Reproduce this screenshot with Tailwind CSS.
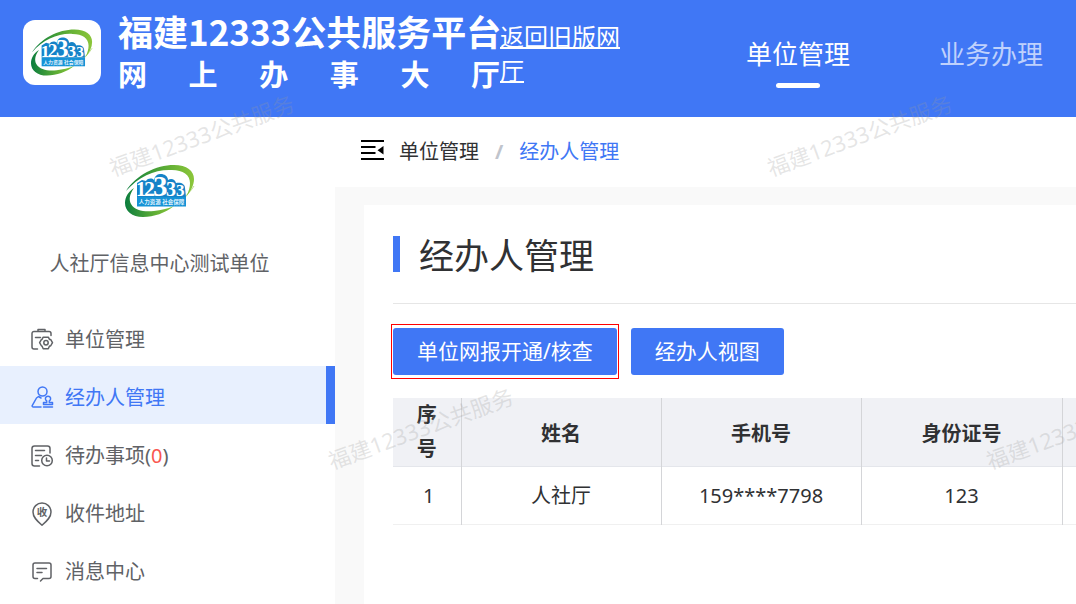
<!DOCTYPE html>
<html lang="zh-CN">
<head>
    <meta charset="UTF-8">
    <meta name="viewport" content="width=device-width, initial-scale=1.0">
    <title>福建12333公共服务平台 - 经办人管理</title>
    <script src="https://cdn.jsdelivr.net/npm/@tailwindcss/browser@4"></script>
</head>
<body class="relative flex h-screen flex-col overflow-hidden bg-white font-['Noto_Sans','Noto_Sans_CJK_SC',sans-serif] text-xl text-[#303133]">
    <!-- Shared logo -->
    <svg class="absolute size-0" aria-hidden="true">
        <defs>
            <linearGradient id="swoosh" x1="0" y1="0" x2="1" y2="0">
                <stop offset="0" stop-color="#0b7d3e"></stop>
                <stop offset="0.6" stop-color="#5fae35"></stop>
                <stop offset="1" stop-color="#8cc63a"></stop>
            </linearGradient>
        </defs>
        <symbol id="logo" viewBox="0 0 70 53">
            <path fill="url(#swoosh)" d="M1 26C11 10 31 0 49 0c13 0 20 6 20 14 0 6-3 12-8 18 3-6 4-10 4-14 0-8-7-13-18-13C31 4 14 11 1 26z"></path>
            <path fill="url(#swoosh)" d="M9 23C4 30 4 35 6 39c4 7 14 8 23 7 7-1 13-2 20-5-9 7-20 11-31 11C7 52 0 46 0 38c0-6 3-11 9-15z"></path>
            <path stroke="#8cc63a" stroke-width="0.6" fill="none" d="M69 21c-3 5-7 9-11 12"></path>
            <path fill="#1583c8" d="M12 18l5-3 4 1c2-3 6-3 8-1 1-5 4-6 7-6s7 2 7 6c3-2 7-1 8 3 5-1 9 1 9 5l1 9H12z"></path>
            <g font-family="Liberation Serif" font-weight="bold" fill="#fff">
                <text x="11" y="31" font-size="20">1</text>
                <text x="19" y="31" font-size="22">2</text>
                <text x="28" y="31" font-size="29">3</text>
                <text x="41" y="31" font-size="20">3</text>
                <text x="51" y="31" font-size="17">3</text>
            </g>
            <rect x="12" y="32" width="49" height="9.500" fill="#1593d6"></rect>
            <text x="36.500" y="39" font-size="5.500" text-anchor="middle" fill="#e4f4fd" font-weight="bold">人力资源 社会保障</text>
        </symbol>
    </svg>

    <!-- Header -->
    <header class="flex h-[117px] shrink-0 items-start bg-[#4077f5] text-white">
        <div class="mt-5 ml-[23px] flex h-[65px] w-[78px] shrink-0 items-center justify-center rounded-xl bg-white">
            <svg class="h-12 w-[62px]"><use href="#logo"></use></svg>
        </div>
        <h1 class="mt-[10px] ml-[17px] w-[382px] shrink-0 font-['Noto_Sans_CJK_SC',sans-serif] font-bold">
            <span class="block text-[35px] leading-[42px] whitespace-nowrap">福建12333公共服务平台</span>
            <span class="flex justify-between text-[29px] leading-[42px]">
                <span>网</span><span>上</span><span>办</span><span>事</span><span>大</span><span>厅</span>
            </span>
        </h1>
        <a href="#" class="mt-5 w-[122px] shrink-0 text-2xl leading-[34px] break-all underline underline-offset-1">返回旧版网厅</a>
        <nav class="mt-9 ml-auto flex shrink-0 gap-[89px] pr-[33px] text-[26px] leading-9 whitespace-nowrap">
            <a href="#" class="flex flex-col items-center gap-[11px]">单位管理<span class="h-[5px] w-11 rounded-full bg-white"></span></a>
            <a href="#" class="text-[#bfd1fc]">业务办理</a>
        </nav>
    </header>

    <div class="flex min-h-0 flex-1">
        <!-- Sidebar -->
        <aside class="w-[335px] shrink-0 text-[#606266]">
            <div class="flex h-[191px] flex-col items-center pt-12 pr-4">
                <svg class="h-[53px] w-[70px]"><use href="#logo"></use></svg>
                <p class="mt-[30px] leading-8">人社厅信息中心测试单位</p>
            </div>
            <nav>
                <a href="#" class="flex h-[58px] items-center gap-[11px] pt-[6px] pl-[30px]">
                    <svg class="size-6" viewBox="0 0 24 24" fill="none" stroke="currentColor" stroke-width="1.500" stroke-linecap="round" stroke-linejoin="round">
                        <path d="M7.500 21H4a2 2 0 0 1-2-2V5.500a2 2 0 0 1 2-2h15a2 2 0 0 1 2 2v2M8 3.500V1.500h7v2M5.500 9.500h5"></path>
                        <path d="M13.200 9.200h5.100l1.200 2.200h1.100l1.900 3.300-1.900 3.300h-1.100l-1.200 2.700h-5.100l-1.200-2.700h-.5L9.600 14.700l1.900-3.300h.5z"></path>
                        <circle cx="16" cy="14.800" r="2.200"></circle>
                    </svg>
                    <span>单位管理</span>
                </a>
                <a href="#" aria-current="page" class="flex h-[58px] items-center gap-[11px] border-r-[9px] border-[#4077f5] bg-[#e8f0fe] pt-[6px] pl-[30px] text-[#4077f5]">
                    <svg class="size-6" viewBox="0 0 24 24" fill="none" stroke="currentColor" stroke-width="1.500" stroke-linecap="round" stroke-linejoin="round">
                        <circle cx="12.500" cy="5.500" r="4.500"></circle>
                        <path d="M11 21H3a1 1 0 0 1-.8-1.400L6.500 12l2-1.500 2.500 1.500"></path>
                        <path d="M13.500 21h9M13.500 18.500v-2h3.200V15a2.600 2.600 0 1 1 2.600 0v1.500h3.200v2z"></path>
                    </svg>
                    <span>经办人管理</span>
                </a>
                <a href="#" class="flex h-[58px] items-center gap-[11px] pt-[6px] pl-[30px]">
                    <svg class="size-6" viewBox="0 0 24 24" fill="none" stroke="currentColor" stroke-width="1.500" stroke-linecap="round" stroke-linejoin="round">
                        <path d="M9.500 22H4.500A2.500 2.500 0 0 1 2 19.500v-15A2.500 2.500 0 0 1 4.500 2h13A2.500 2.500 0 0 1 20 4.500V9M5.500 6.500h9M5.500 11.500h6M5.500 16.500h3"></path>
                        <circle cx="17" cy="16.500" r="5.300"></circle>
                        <path d="M16.500 14v3h3"></path>
                    </svg>
                    <span>待办事项(<span class="text-[#f9564f]">0</span>)</span>
                </a>
                <a href="#" class="flex h-[58px] items-center gap-[11px] pt-[6px] pl-[30px]">
                    <svg class="size-6" viewBox="0 0 24 24" fill="none" stroke="currentColor" stroke-width="1.500" stroke-linecap="round" stroke-linejoin="round">
                        <path d="M12 23.200C6.500 18.500 3 15 3 10a9 9 0 0 1 18 0c0 5-3.500 8.500-9 13.200z"></path>
                        <text x="12" y="14" font-size="10.500" text-anchor="middle" fill="currentColor" stroke="none" font-weight="bold">收</text>
                    </svg>
                    <span>收件地址</span>
                </a>
                <a href="#" class="flex h-[58px] items-center gap-[11px] pt-[6px] pl-[30px]">
                    <svg class="size-6" viewBox="0 0 24 24" fill="none" stroke="currentColor" stroke-width="1.500" stroke-linecap="round" stroke-linejoin="round">
                        <path d="M7.500 18.500H5a2 2 0 0 1-2-2V5a2 2 0 0 1 2-2h14a2 2 0 0 1 2 2v11.500a2 2 0 0 1-2 2h-6L10.500 21M7 8.500h9.500M7 12.500h5"></path>
                    </svg>
                    <span>消息中心</span>
                </a>
            </nav>
        </aside>

        <!-- Main Content -->
        <main class="flex min-w-0 flex-1 flex-col bg-[#f9f9f9]">
            <div class="flex h-[70px] shrink-0 items-center bg-white pl-[25px]">
                <button type="button" aria-label="收起菜单" class="mr-[15px]">
                    <svg class="block size-6 text-black" viewBox="0 2 24 24" fill="none" stroke="currentColor" stroke-width="2">
                        <path d="M1 3h23M1 9h14.500M1 15h14.500M1 21h23"></path>
                        <path d="M23.500 8v8.500l-6-4.200z" fill="currentColor" stroke="none"></path>
                    </svg>
                </button>
                <nav class="flex items-center gap-4">
                    <a href="#">单位管理</a>
                    <span class="font-bold text-[#c0c4cc]">/</span>
                    <a href="#" class="text-[#4077f5]">经办人管理</a>
                </nav>
            </div>

            <section class="mt-[18px] ml-[29px] flex-1 overflow-hidden bg-white pl-[29px]">
                <div class="flex h-[99px] items-center gap-[19px] border-b border-[#e6e6e6]">
                    <span class="h-9 w-[7px] bg-[#4077f5]"></span>
                    <h2 class="pt-1 text-[35px] leading-10">经办人管理</h2>
                </div>
                <div class="mt-6 flex items-center gap-3 text-[21px] whitespace-nowrap">
                    <div class="-my-1 -ml-0.5 border border-[#ff0000] px-px py-[3px]">
                        <button type="button" class="block h-[47px] rounded-[3px] bg-[#4077f5] px-6 text-white">单位网报开通/核查</button>
                    </div>
                    <button type="button" class="h-[47px] rounded-[3px] bg-[#4077f5] px-6 text-white">经办人视图</button>
                </div>
                <table class="mt-[23px] w-[1070px] table-fixed border-collapse text-center">
                    <thead>
                        <tr class="h-[68px] border-b border-[#e4e6eb] bg-[#f0f1f5]">
                            <th class="w-[68px] border-r border-[#d4d5d8] px-5 leading-[34px]">序号</th>
                            <th class="w-[200px] border-r border-[#d4d5d8] pt-1">姓名</th>
                            <th class="w-[200px] border-r border-[#d4d5d8] pt-1">手机号</th>
                            <th class="w-[201px] border-r border-[#d4d5d8] pt-1">身份证号</th>
                            <th></th>
                        </tr>
                    </thead>
                    <tbody>
                        <tr class="h-[58px] border-b border-[#f0f0f0]">
                            <td class="border-r border-[#d4d5d8] pl-1">1</td>
                            <td class="border-r border-[#d4d5d8]">人社厅</td>
                            <td class="border-r border-[#d4d5d8]">159****7798</td>
                            <td class="border-r border-[#d4d5d8]">123</td>
                            <td></td>
                        </tr>
                    </tbody>
                </table>
            </section>
        </main>
    </div>

    <!-- Watermark -->
    <div class="pointer-events-none absolute inset-0 overflow-hidden text-[22px] leading-8 whitespace-nowrap text-[#999999]/25" aria-hidden="true">
        <span class="absolute top-[119px] left-[104px] -rotate-20">福建12333公共服务</span>
        <span class="absolute top-[119px] left-[762px] -rotate-20">福建12333公共服务</span>
        <span class="absolute top-[412px] left-[323px] -rotate-20">福建12333公共服务</span>
        <span class="absolute top-[412px] left-[981px] -rotate-20">福建12333公共服务</span>
    </div>
</body>
</html>
